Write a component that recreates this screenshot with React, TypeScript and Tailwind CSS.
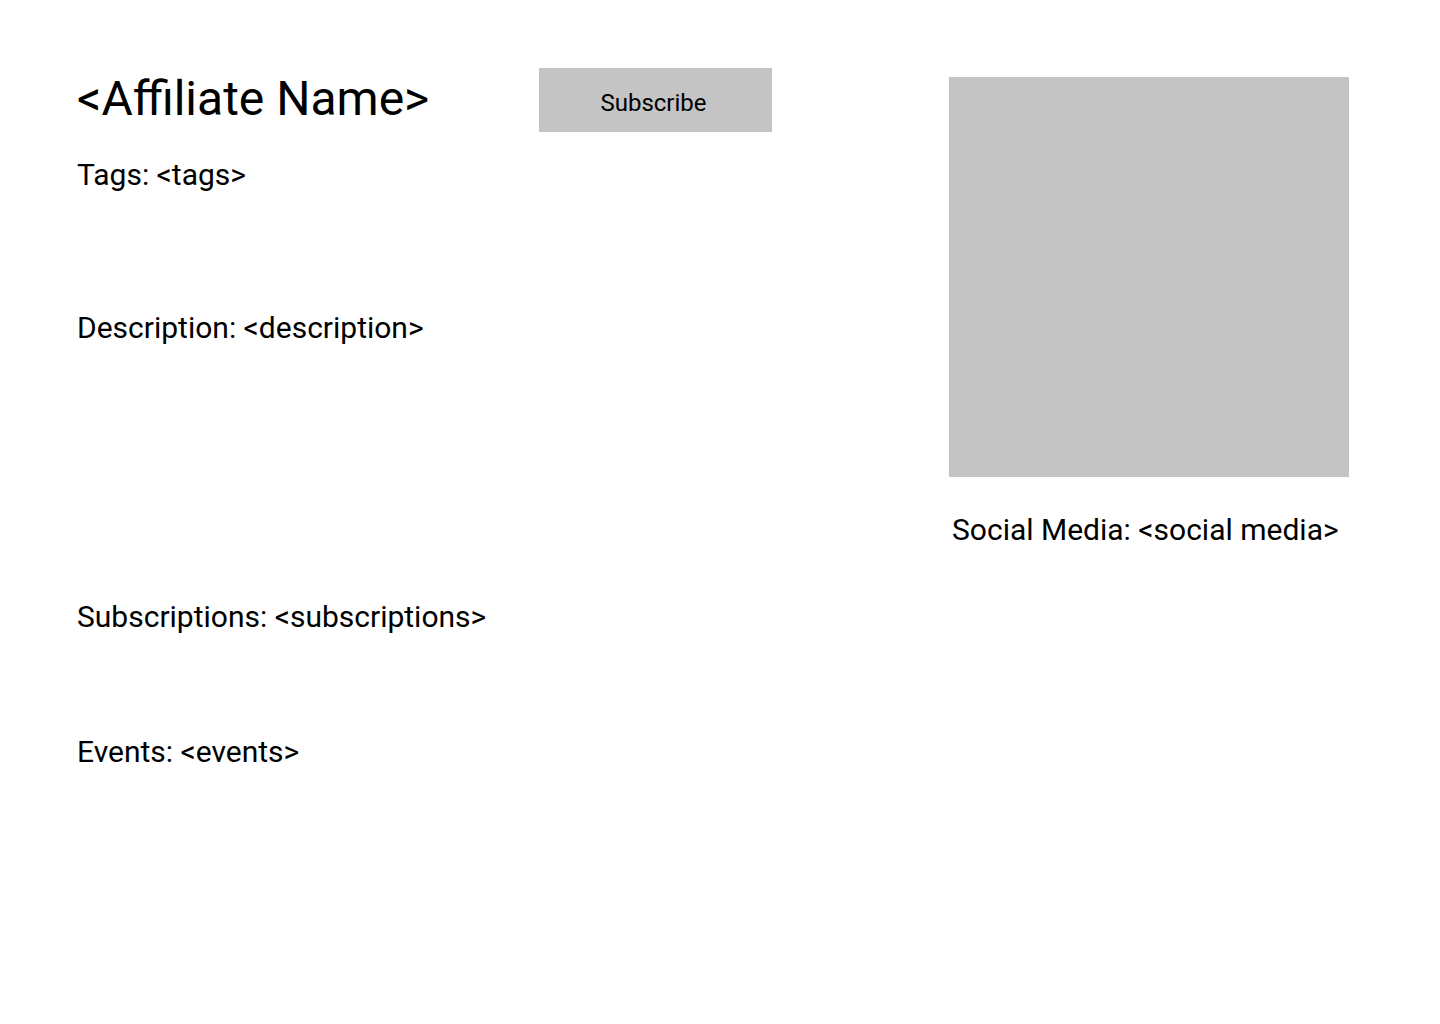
export default function App() {
  return (
    <div className="min-h-screen w-[1440px] bg-white text-black font-['Roboto',sans-serif]">
      <div className="flex">
        <div className="pl-[77px] pt-[68px] w-[949px]">
          <div className="flex items-start">
            <h1 className="w-[462px] pt-[3px] text-[48px] leading-[56px] font-normal">&lt;Affiliate Name&gt;</h1>
            <button className="w-[233px] h-[64px] bg-[#c4c4c4] text-[24px] leading-[28px] pt-[6px] pr-[4px]">Subscribe</button>
          </div>
          <div className="mt-[25px] text-[30px] leading-[36px]">Tags: &lt;tags&gt;</div>
          <div className="mt-[117px] text-[30px] leading-[36px]">Description: &lt;description&gt;</div>
          <div className="mt-[253px] text-[30px] leading-[36px]">Subscriptions: &lt;subscriptions&gt;</div>
          <div className="mt-[99px] text-[30px] leading-[36px]">Events: &lt;events&gt;</div>
        </div>
        <div className="pt-[77px]">
          <div className="w-[400px] h-[400px] bg-[#c4c4c4]" />
          <div className="mt-[35px] pl-[3px] text-[30px] leading-[36px]">Social Media: &lt;social media&gt;</div>
        </div>
      </div>
    </div>
  );
}
